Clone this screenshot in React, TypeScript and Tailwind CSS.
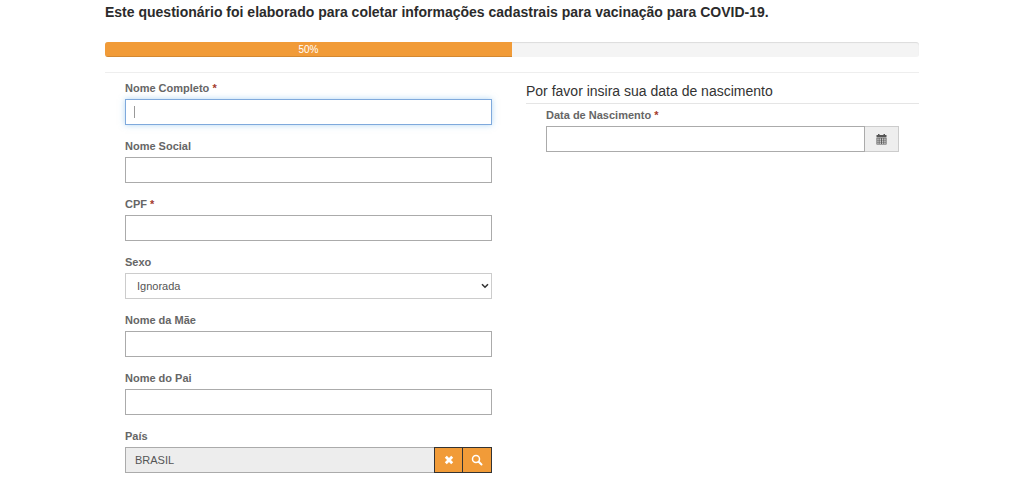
import { ReactNode } from "react";

const inputClass =
  "block h-[26px] w-full min-w-0 border border-[#ababab] bg-white px-[9px] text-[11px] text-[#555] outline-none focus:border-[#7fa9dc] focus:shadow-[0_0_6px_rgba(102,175,233,0.5)]";

const squareButton =
  "flex h-[26px] shrink-0 items-center justify-center border border-[#333] bg-[#f19b38] text-white";

interface FieldProps {
  id: string;
  label: string;
  required?: boolean;
  children: ReactNode;
}

function Field({ id, label, required, children }: FieldProps) {
  return (
    <div className="mb-[13px] last:mb-0">
      <label htmlFor={id} className="mb-[3px] block text-[11px] leading-4 font-bold text-[#666]">
        {label}
        {required && <span className="text-[#a33a2c]"> *</span>}
      </label>
      {children}
    </div>
  );
}

function CalendarIcon() {
  return (
    <svg viewBox="0 0 11 11" className="h-[11px] w-[11px]" fill="#555" aria-hidden="true">
      <path d="M0.5 1H2V0h1.5v1h4V0H9v1h1.5v2h-10z" />
      <path
        fillRule="evenodd"
        d="M0.5 3.6h10V10.6h-10zM1.3 4.6v1.2h1.4V4.6zM3.5 4.6v1.2h1.5V4.6zM5.9 4.6v1.2h1.5V4.6zM8.2 4.6v1.2h1.5V4.6zM1.3 6.6v1.2h1.4V6.6zM3.5 6.6v1.2h1.5V6.6zM5.9 6.6v1.2h1.5V6.6zM8.2 6.6v1.2h1.5V6.6zM1.3 8.6v1.2h1.4V8.6zM3.5 8.6v1.2h1.5V8.6zM5.9 8.6v1.2h1.5V8.6zM8.2 8.6v1.2h1.5V8.6z"
      />
    </svg>
  );
}

function RemoveIcon() {
  return (
    <svg viewBox="0 0 10 10" className="h-[10px] w-[10px]" fill="none" stroke="currentColor" strokeWidth="2.8" aria-hidden="true">
      <path d="M1.8 1.8l6.4 6.4M8.2 1.8L1.8 8.2" />
    </svg>
  );
}

function SearchIcon() {
  return (
    <svg viewBox="0 0 12 12" className="h-3 w-3" fill="none" stroke="currentColor" aria-hidden="true">
      <circle cx="5" cy="5" r="3.5" strokeWidth="1.5" />
      <path d="M7.7 7.7l2.8 2.8" strokeWidth="2" strokeLinecap="round" />
    </svg>
  );
}

export default function App() {
  const progress = 50;

  return (
    <main className="mx-auto w-full max-w-[814px] font-['Liberation_Sans',Arial,sans-serif] text-[#333]">
      <h1 className="pt-[2px] text-[14px] leading-5 font-bold text-[#2b2b2b]">
        Este questionário foi elaborado para coletar informações cadastrais para vacinação para COVID-19.
      </h1>

      <div
        className="mt-5 h-[15px] overflow-hidden rounded-[3px] bg-[#f4f4f4] shadow-[inset_0_1px_1px_rgba(0,0,0,0.1)]"
        role="progressbar"
        aria-valuenow={progress}
        aria-valuemin={0}
        aria-valuemax={100}
      >
        <div
          className="h-full bg-[#f19b38] text-center text-[10px] leading-4 text-white shadow-[inset_0_-1px_0_rgba(0,0,0,0.12)]"
          style={{ width: `${progress}%` }}
        >
          {progress}%
        </div>
      </div>

      <form className="mt-[15px] flex border-t border-[#eee]">
        <div className="w-1/2 px-5 pt-[7px]">
          <Field id="nome" label="Nome Completo" required>
            <div className="group relative">
              <input id="nome" type="text" autoFocus className={`${inputClass} caret-transparent`} />
              <span className="pointer-events-none absolute top-[7px] left-[9px] hidden h-3 w-px bg-[#999] group-focus-within:block" />
            </div>
          </Field>
          <Field id="nome-social" label="Nome Social">
            <input id="nome-social" type="text" className={inputClass} />
          </Field>
          <Field id="cpf" label="CPF" required>
            <input id="cpf" type="text" className={inputClass} />
          </Field>
          <Field id="sexo" label="Sexo">
            <div className="relative">
              <select
                id="sexo"
                className="block h-[26px] w-full appearance-none border border-[#ccc] bg-white pl-[11px] text-[11px] text-[#555]"
              >
                <option>Ignorada</option>
                <option>Feminino</option>
                <option>Masculino</option>
              </select>
              <svg
                viewBox="0 0 8 6"
                className="pointer-events-none absolute top-[10px] right-[3px] h-[6px] w-2"
                fill="none"
                stroke="#333"
                strokeWidth="1.6"
                aria-hidden="true"
              >
                <path d="M1 1.2l3 3 3-3" />
              </svg>
            </div>
          </Field>
          <Field id="mae" label="Nome da Mãe">
            <input id="mae" type="text" className={inputClass} />
          </Field>
          <Field id="pai" label="Nome do Pai">
            <input id="pai" type="text" className={inputClass} />
          </Field>
          <Field id="pais" label="País">
            <div className="flex">
              <input
                id="pais"
                type="text"
                readOnly
                value="BRASIL"
                className="h-[26px] min-w-0 flex-1 border border-r-0 border-[#ababab] bg-[#ededed] px-[9px] text-[11px] text-[#555] outline-none"
              />
              <button type="button" aria-label="Limpar país" className={`${squareButton} w-[29px]`}>
                <RemoveIcon />
              </button>
              <button type="button" aria-label="Buscar país" className={`${squareButton} w-[29px] border-l-0`}>
                <SearchIcon />
              </button>
            </div>
          </Field>
        </div>

        <div className="w-1/2 pl-[14px]">
          <h2 className="border-b border-[#e5e5e5] pt-2 pb-[2px] text-[14px] leading-5">
            Por favor insira sua data de nascimento
          </h2>
          <div className="px-5 pt-[3px]">
            <Field id="nascimento" label="Data de Nascimento" required>
              <div className="flex">
                <input id="nascimento" type="text" className={inputClass} />
                <button
                  type="button"
                  aria-label="Abrir calendário"
                  className="flex h-[26px] w-[34px] shrink-0 items-center justify-center border border-l-0 border-[#ccc] bg-[#eee]"
                >
                  <CalendarIcon />
                </button>
              </div>
            </Field>
          </div>
        </div>
      </form>
    </main>
  );
}
